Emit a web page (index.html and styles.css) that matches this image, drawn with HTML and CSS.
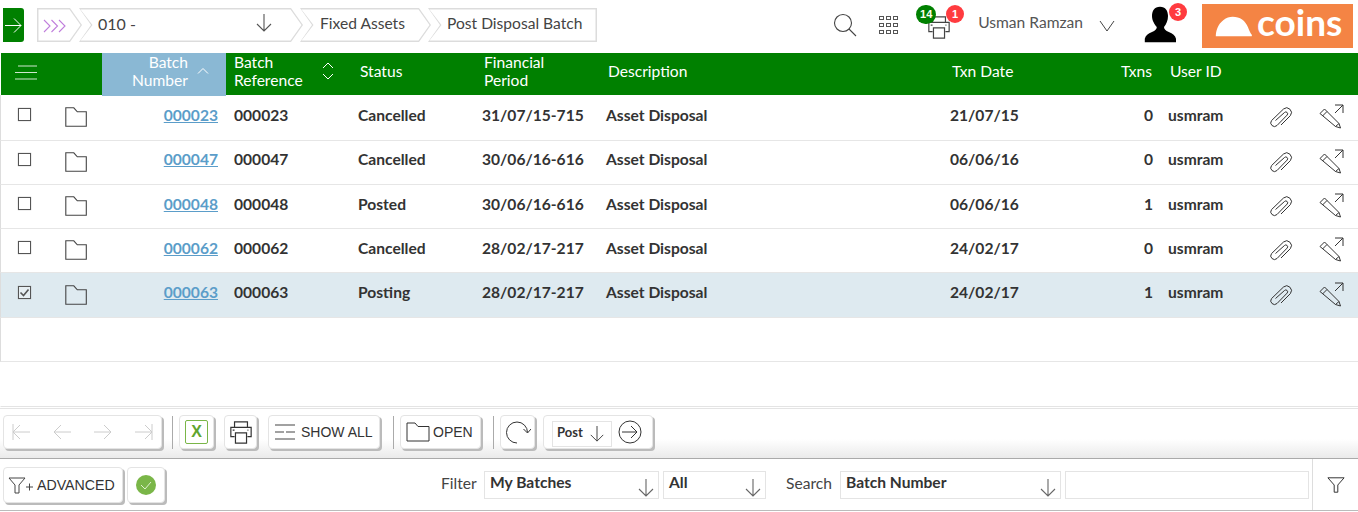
FILE: index.html
```html
<!DOCTYPE html>
<html lang="en">
<head>
<meta charset="utf-8">
<title>Post Disposal Batch</title>
<link rel="stylesheet" href="styles.css">
</head>
<body>
<svg class="defs" width="0" height="0" aria-hidden="true">
  <symbol id="folder" viewBox="0 0 22 20"><path d="M.8.800h8l3.500 4h9v14.500H.8z" fill="none" stroke="currentColor" stroke-width="1.100"/></symbol>
  <symbol id="clip" viewBox="0 0 26 24"><path d="M7.500 15.500 16.500 7.500a1.800 1.800 0 0 1 2.600 2.600L9 20.500a3.700 3.700 0 0 1-5.500-4.900L15.500 4a4.800 4.800 0 0 1 6.900 6.600L13 20" fill="none" stroke="currentColor" stroke-width="1"/></symbol>
  <symbol id="edit" viewBox="0 0 26 26"><path d="M1 9.500 5.500 5 20 19.500l1.500 4.500-5-1.500zM3.500 12 8 7.500M16.500 22.500l3.500-3M16 1h8v8M24 1l-8 8" fill="none" stroke="currentColor" stroke-width="1"/></symbol>
  <symbol id="down" viewBox="0 0 18 20"><path d="M9 1v17M2 11l7 7 7-7" fill="none" stroke="currentColor" stroke-width="1.100"/></symbol>
  <symbol id="printer" viewBox="0 0 26 26"><path d="M6 8V2h14v6M6 18H2V8h22v10h-4M7 14h12v11H7zM4 11h2M20 11h1" fill="none" stroke="currentColor" stroke-width="1.300"/></symbol>
  <symbol id="funnel" viewBox="0 0 20 20"><path d="M1 2h18l-7 8v8h-4v-8z" fill="none" stroke="currentColor" stroke-width="1.100"/></symbol>
</svg>

<header class="topbar">
  <a class="go"><svg width="17" height="17" viewBox="0 0 17 17"><path d="M0 8.500h16M9 1.500l7 7-7 7" fill="none" stroke="#fff" stroke-width="1"/></svg></a>
  <nav class="crumbs">
    <div class="crumb first"><svg class="chev" width="23" height="14" viewBox="0 0 23 14"><path d="M1 1l6 6-6 6M8.500 1l6 6-6 6M16 1l6 6-6 6" fill="none" stroke="#c07fdc" stroke-width="1.100"/></svg></div>
    <div class="crumb company"><span>010 -</span><svg class="crumb-arrow" width="18" height="20"><use href="#down"/></svg></div>
    <div class="crumb assets"><span>Fixed Assets</span></div>
    <div class="crumb last"><span>Post Disposal Batch</span></div>
  </nav>
  <div class="tools">
    <svg class="search" width="24" height="24" viewBox="0 0 24 24"><circle cx="10" cy="10" r="8.500" fill="none" stroke="#444" stroke-width="1.100"/><path d="M16 16l7 7" stroke="#444" stroke-width="1.100"/></svg>
    <div class="apps"><i></i><i></i><i></i><i></i><i></i><i></i><i></i><i></i><i></i></div>
    <div class="printjobs">
      <svg class="printjobs-icon" width="24" height="24"><use href="#printer"/></svg>
      <span class="badge green">14</span>
      <span class="badge red one">1</span>
    </div>
    <span class="username">Usman Ramzan</span>
    <svg class="userchev" width="16" height="12" viewBox="0 0 16 12"><path d="M1 1l7 10 7-10" fill="none" stroke="#444" stroke-width="1"/></svg>
    <div class="avatar">
      <svg width="32" height="37" viewBox="0 0 40 44" preserveAspectRatio="none"><path d="M20 1c7 0 10 5 10 11 0 5-2 10-5 13 0 3 2 4 6 6 5 2 8 4 9 8v4H1v-4c1-4 4-6 9-8 4-2 6-3 6-6-3-3-6-8-6-13C10 6 13 1 20 1z" fill="#000"/></svg>
      <span class="badge red three">3</span>
    </div>
    <div class="logo">
      <svg width="37" height="21" viewBox="0 0 46 26" preserveAspectRatio="none"><path d="M1 25c0-3 .5-6 2-10C6 7 14 1 22 1c9 0 16 5 19 13 1.500 4 3 7 4.500 9 .5 1 .5 2 0 2z" fill="#fff"/></svg>
      <span class="logotext">coins</span>
    </div>
  </div>
</header>

<main class="grid-area">
  <div class="row head">
    <div class="cell menu"><svg width="22" height="15" viewBox="0 0 22 15"><path d="M3 1h19M0 7.500h22M0 14h22" stroke="#cfe6cf" stroke-width="1"/></svg></div>
    <div class="cell"></div>
    <div class="cell sorted"><span>Batch<br>Number</span><svg width="12" height="8" viewBox="0 0 12 8"><path d="M1 6.500l5-5 5 5" fill="none" stroke="#fff"/></svg></div>
    <div class="cell hdr-ref"><span>Batch<br>Reference</span><svg width="12" height="18" viewBox="0 0 12 18"><path d="M1 6l5-5 5 5M1 12l5 5 5-5" fill="none" stroke="#fff"/></svg></div>
    <div class="cell hdr">Status</div>
    <div class="cell hdr">Financial<br>Period</div>
    <div class="cell hdr">Description</div>
    <div class="cell hdr">Txn Date</div>
    <div class="cell hdr num">Txns</div>
    <div class="cell hdr">User ID</div>
    <div class="cell"></div>
    <div class="cell"></div>
  </div>

  <div class="row tall">
    <div class="cell"><span class="check"></span></div>
    <div class="cell"><svg class="folder" width="22" height="20"><use href="#folder"/></svg></div>
    <div class="cell num link"><a>000023</a></div>
    <div class="cell">000023</div><div class="cell">Cancelled</div><div class="cell">31/07/15-715</div><div class="cell">Asset Disposal</div><div class="cell">21/07/15</div><div class="cell num">0</div><div class="cell">usmram</div>
    <div class="cell"><svg class="act" width="26" height="24"><use href="#clip"/></svg></div>
    <div class="cell"><svg class="act" width="26" height="26"><use href="#edit"/></svg></div>
  </div>
  <div class="row raised">
    <div class="cell"><span class="check"></span></div>
    <div class="cell"><svg class="folder" width="22" height="20"><use href="#folder"/></svg></div>
    <div class="cell num link"><a>000047</a></div>
    <div class="cell">000047</div><div class="cell">Cancelled</div><div class="cell">30/06/16-616</div><div class="cell">Asset Disposal</div><div class="cell">06/06/16</div><div class="cell num">0</div><div class="cell">usmram</div>
    <div class="cell"><svg class="act" width="26" height="24"><use href="#clip"/></svg></div>
    <div class="cell"><svg class="act" width="26" height="26"><use href="#edit"/></svg></div>
  </div>
  <div class="row">
    <div class="cell"><span class="check"></span></div>
    <div class="cell"><svg class="folder" width="22" height="20"><use href="#folder"/></svg></div>
    <div class="cell num link"><a>000048</a></div>
    <div class="cell">000048</div><div class="cell">Posted</div><div class="cell">30/06/16-616</div><div class="cell">Asset Disposal</div><div class="cell">06/06/16</div><div class="cell num">1</div><div class="cell">usmram</div>
    <div class="cell"><svg class="act" width="26" height="24"><use href="#clip"/></svg></div>
    <div class="cell"><svg class="act" width="26" height="26"><use href="#edit"/></svg></div>
  </div>
  <div class="row">
    <div class="cell"><span class="check"></span></div>
    <div class="cell"><svg class="folder" width="22" height="20"><use href="#folder"/></svg></div>
    <div class="cell num link"><a>000062</a></div>
    <div class="cell">000062</div><div class="cell">Cancelled</div><div class="cell">28/02/17-217</div><div class="cell">Asset Disposal</div><div class="cell">24/02/17</div><div class="cell num">0</div><div class="cell">usmram</div>
    <div class="cell"><svg class="act" width="26" height="24"><use href="#clip"/></svg></div>
    <div class="cell"><svg class="act" width="26" height="26"><use href="#edit"/></svg></div>
  </div>
  <div class="row selected raised">
    <div class="cell"><span class="check on"><svg width="11" height="11" viewBox="0 0 11 11"><path d="M1.500 5.500l3 3 5-6" fill="none" stroke="#555" stroke-width="1.600"/></svg></span></div>
    <div class="cell"><svg class="folder" width="22" height="20"><use href="#folder"/></svg></div>
    <div class="cell num link"><a>000063</a></div>
    <div class="cell">000063</div><div class="cell">Posting</div><div class="cell">28/02/17-217</div><div class="cell">Asset Disposal</div><div class="cell">24/02/17</div><div class="cell num">1</div><div class="cell">usmram</div>
    <div class="cell"><svg class="act" width="26" height="24"><use href="#clip"/></svg></div>
    <div class="cell"><svg class="act" width="26" height="26"><use href="#edit"/></svg></div>
  </div>
  <div class="row blank"></div>
</main>

<section class="toolbar">
  <div class="btn nav">
    <svg width="20" height="20" viewBox="0 0 20 20"><path d="M2 2v16M19 10H2M9 3l-7 7 7 7" fill="none" stroke="#ccc"/></svg>
    <svg width="20" height="20" viewBox="0 0 20 20"><path d="M19 10H2M9 3l-7 7 7 7" fill="none" stroke="#ccc"/></svg>
    <svg width="20" height="20" viewBox="0 0 20 20"><path d="M1 10h17M11 3l7 7-7 7" fill="none" stroke="#ccc"/></svg>
    <svg width="20" height="20" viewBox="0 0 20 20"><path d="M18 2v16M1 10h17M11 3l7 7-7 7" fill="none" stroke="#ccc"/></svg>
  </div>
  <span class="sep"></span>
  <div class="btn excel"><span class="xl">X</span></div>
  <div class="btn print"><svg width="24" height="26"><use href="#printer"/></svg></div>
  <div class="btn showall"><svg width="20" height="17" viewBox="0 0 20 17"><path d="M0 1h20M0 8h9M11 8h9M0 15h20" stroke="#444" stroke-width="1.200"/></svg><span>SHOW ALL</span></div>
  <span class="sep"></span>
  <div class="btn open"><svg width="24" height="24" viewBox="0 0 24 20"><path d="M1 1h8l3 3.500h11v14.500H1z" fill="none" stroke="#333" stroke-width="1"/></svg><span>OPEN</span></div>
  <span class="sep"></span>
  <div class="btn refresh"><svg width="26" height="24" viewBox="0 0 26 24"><path d="M12 23A10.500 10.500 0 1 1 22.500 12.500M18.500 9l4 4 3.500-4" fill="none" stroke="#333" stroke-width="1"/></svg></div>
  <div class="btn post">
    <div class="postsel"><b>Post</b><svg width="16" height="18"><use href="#down"/></svg></div>
    <svg width="24" height="24" viewBox="0 0 24 24"><circle cx="12" cy="12" r="11" fill="none" stroke="#333"/><path d="M4 12h15M13 6l6 6-6 6" fill="none" stroke="#333"/></svg>
  </div>
</section>

<footer class="filterbar">
  <div class="btn advanced"><svg width="26" height="18" viewBox="0 0 26 18"><path d="M1 2h16l-6 7v8H7V9zM18 11h7M21.500 7.500v7" fill="none" stroke="#444"/></svg><span>ADVANCED</span></div>
  <div class="btn ok"><svg width="20" height="20" viewBox="0 0 20 20"><circle cx="10" cy="10" r="10" fill="#7ab648"/><path d="M5 10l4 4 6-7" fill="none" stroke="#dff0cf"/></svg></div>
  <span class="label filter-label">Filter</span>
  <div class="select mybatches"><b>My Batches</b><svg width="18" height="20"><use href="#down"/></svg></div>
  <div class="select all"><b>All</b><svg width="18" height="20"><use href="#down"/></svg></div>
  <span class="label search-label">Search</span>
  <div class="select batchnum"><b>Batch Number</b><svg width="18" height="20"><use href="#down"/></svg></div>
  <div class="select searchbox"></div>
  <div class="filter-go"><svg width="18" height="18"><use href="#funnel"/></svg></div>
</footer>
</body>
</html>
```

FILE: styles.css
```css
* { box-sizing: border-box; }
html, body { margin: 0; height: 512px; overflow: hidden; background: #fff; }
body { font-family: Lato, "Open Sans", sans-serif; color: #333; display: flex; flex-direction: column; }
.defs { position: absolute; }
svg { display: block; flex: none; }

/* top bar */
.topbar { height: 53px; display: flex; align-items: flex-start; padding: 8px 0 0 3px; flex: none; }
.go { width: 21px; height: 34px; background: #008000; border-radius: 0 3px 3px 0; display: flex; align-items: center; justify-content: center; }
.crumbs { display: flex; margin-left: 13px; height: 34px; }
.crumb { position: relative; height: 34px; background: #dcdcdc; font-size: 15.600px; color: #444; display: flex; align-items: center;
  clip-path: polygon(0 0, calc(100% - 12px) 0, 100% 50%, calc(100% - 12px) 100%, 0 100%, 12px 50%); margin-left: -3px; }
.crumb::before { content: ""; position: absolute; inset: 0; background: #fff;
  clip-path: polygon(1.500px 1.500px, calc(100% - 12.500px) 1.500px, calc(100% - 1.500px) 50%, calc(100% - 12.500px) calc(100% - 1.500px), 1.500px calc(100% - 1.500px), 13.500px 50%); }
.crumb > * { position: relative; }
.crumb.first { width: 45px; margin-left: 0; padding-left: 6px; clip-path: polygon(0 0, calc(100% - 12px) 0, 100% 50%, calc(100% - 12px) 100%, 0 100%); }
.crumb.first::before { clip-path: polygon(1.500px 1.500px, calc(100% - 12.500px) 1.500px, calc(100% - 1.500px) 50%, calc(100% - 12.500px) calc(100% - 1.500px), 1.500px calc(100% - 1.500px)); }
.chev { margin-top: 1px; }
.crumb.company { width: 224px; padding: 0 0 3px 19px; font-size: 16px; }
.crumb-arrow { position: absolute !important; left: 176px; top: 5px; color: #555; }
.crumb.assets { width: 131px; padding: 0 0 5px 20px; }
.crumb.last { width: 169px; padding: 0 0 5px 19px; clip-path: polygon(0 0, 100% 0, 100% 100%, 0 100%, 12px 50%); }
.crumb.last::before { clip-path: polygon(1.500px 1.500px, calc(100% - 1.500px) 1.500px, calc(100% - 1.500px) calc(100% - 1.500px), 1.500px calc(100% - 1.500px), 13.500px 50%); }

.tools { margin-left: auto; display: flex; align-items: center; height: 42px; margin-top: -6px; padding-right: 5px; }
.search { margin-right: 22px; margin-top: 4px; }
.apps { display: grid; grid-template-columns: repeat(3, 5px); gap: 3px 2px; margin-right: 19px; margin-top: 3px; }
.apps i { display: block; width: 5px; height: 4px; border: 1px solid #555; }
.printjobs { position: relative; width: 48px; height: 42px; margin-right: 13px; }
.printjobs-icon { position: absolute; left: 10px; top: 13px; color: #444; }
.badge { position: absolute; height: 18px; min-width: 18px; border-radius: 9px; color: #fff; font: 700 11px/18px "Liberation Sans", sans-serif; text-align: center; }
.badge.green { background: #008000; left: -1px; top: 3px; width: 20px; height: 19px; border-radius: 10px; line-height: 19px; color: #ffe; }
.badge.red { background: #ff3b3f; }
.badge.one { left: 29px; top: 3px; }
.username { font-size: 15.600px; color: #555; margin-top: -2px; }
.userchev { margin: 5px 0 0 16px; }
.avatar { position: relative; width: 44px; height: 44px; margin: 6px 0 0 28px; }
.avatar svg { margin: 2px 0 0 1px; }
.badge.three { left: 26px; top: -1px; }
.logo { width: 151px; height: 44px; margin-left: 15px; margin-top: 6px; background: #f48444; display: flex; align-items: center; padding-left: 13px; }
.logotext { color: #fff; font: 700 37px/1 Lato, sans-serif; margin: -10px 0 0 5px; }

/* grid */
.grid-area { flex: 1; border-bottom: 1px solid #e4e4e4; border-left: 1px solid #fff; position: relative; }
.row { display: grid; height: 44px; border-bottom: 1px solid #e6e6e6; align-items: center;
  grid-template-columns: 49px 52px 124px 124px 124px 124px 344px 150px 68px 90px 52px 48px;
  font-size: 15.600px; font-weight: 700; color: #333; border-left: 1px solid #ddd; margin-left: -1px; }
.row.tall { height: 46px; }
.cell { padding-left: 8px; padding-bottom: 5px; }
.raised .cell { padding-bottom: 7px; }
.row:not(.head) .cell:nth-child(1) { padding-left: 17px; padding-bottom: 6px; }
.row:not(.head) .cell:nth-child(2) { padding-left: 15px; padding-bottom: 1px; }
.row:not(.head) .cell:nth-child(11) { padding-left: 18px; padding-bottom: 1px; }
.row:not(.head) .cell:nth-child(12) { padding-left: 17px; padding-bottom: 1px; }
.num { text-align: right; padding-right: 7px; padding-left: 0; }
.link { padding-right: 8px; }
.link a { color: #5b9dc9; text-decoration: underline; font-weight: 700; }
.check { display: block; width: 13px; height: 13px; border: 1px solid #555; background: #fff; box-shadow: 0 0 1px #999; }
.check.on { background: #e6eef2; }
.folder { color: #444; }
.act { color: #333; }
.selected { background: #deeaf0; height: 45px; }
.blank { height: 44px; }

.head { height: 42px; background: #008000; color: #fff; font-weight: 400; font-size: 15.600px; line-height: 18px; border: 0; margin-left: 0; align-items: stretch; }
.head .cell { display: flex; align-items: center; padding-bottom: 7px; }
.head .hdr { padding-left: 10px; }
.head .num { justify-content: flex-end; padding: 0 8px 7px 0; }
.head .menu { padding-left: 14px; padding-bottom: 4px; }
.head .sorted { background: #8ab8d4; justify-content: flex-end; text-align: right; padding: 0 17px 7px 0; gap: 9px; }
.hdr-ref { gap: 19px; }

/* toolbar */
.toolbar { height: 51px; flex: none; display: flex; align-items: center; padding: 0 0 0 3px; margin-top: 1px;
  background: linear-gradient(#fff 0, #fff 30px, #e9e9e9 50px); border-bottom: 1px solid #aaa; border-top: 1px solid #e4e4e4; }
.btn { height: 34px; background: #fff; border: 1px solid #e4e4e4; border-radius: 4px; box-shadow: 2px 2px 0 #bbb; display: flex; align-items: center; font: 14px "Liberation Sans", sans-serif; color: #333; }
.toolbar .btn { margin-top: -3px; }
.sep { width: 1px; height: 33px; background: #aaa; margin-top: -3px; }
.nav { width: 159px; padding: 0 7px; justify-content: space-between; }
.nav + .sep { margin: -3px 6px 0 10px; }
.excel { width: 35px; justify-content: center; margin-right: 10px; }
.xl { width: 23px; height: 24px; border: 1px solid #7ab648; border-radius: 2px; color: #5fa52f; font: 700 16px/22px "Liberation Sans", sans-serif; text-align: center; }
.print { width: 33px; justify-content: center; margin-right: 11px; color: #333; }
.showall { width: 112px; padding-left: 6px; gap: 6px; }
.showall + .sep { margin: -3px 6px 0 13px; }
.open { width: 81px; padding-left: 5px; gap: 3px; }
.open + .sep { margin: -3px 6px 0 12px; }
.refresh { width: 35px; justify-content: center; margin-right: 8px; }
.post { width: 110px; padding-left: 8px; gap: 6px; }
.postsel { display: flex; align-items: center; width: 60px; height: 26px; border: 1px solid #e4e4e4; padding-left: 4px; font: 13px Lato, sans-serif; gap: 6px; color: #444; margin-top: 3px; }
.postsel b { margin-top: -4px; color: #333; }

/* filter bar */
.filterbar { height: 52px; flex: none; display: flex; align-items: center; padding: 0 0 0 3px; border-bottom: 1px solid #bbb; position: relative; font-size: 15.600px; margin-bottom: 1px; }
.filterbar .btn { height: 36px; }
.advanced { width: 120px; padding-left: 4px; gap: 3px; font-size: 14.200px; }
.ok { width: 38px; justify-content: center; margin-left: 4px; }
.label { color: #444; margin-top: -3px; }
.filter-label { margin-left: 276px; width: 43px; }
.select { height: 28px; border: 1px solid #e4e4e4; display: flex; justify-content: space-between; padding: 0 3px 0 5px; color: #333; margin-top: 1px; }
.select svg { margin-top: 6px; color: #666; }
.select b { line-height: 20px; }
.mybatches { width: 175px; }
.all { width: 103px; margin-left: 4px; }
.search-label { margin-left: 20px; width: 54px; }
.batchnum { width: 221px; }
.searchbox { width: 244px; margin-left: 4px; }
.filter-go { position: absolute; right: 0; top: 0; bottom: 0; width: 46px; border-left: 1px solid #ddd; display: flex; align-items: center; justify-content: center; color: #333; }
```
